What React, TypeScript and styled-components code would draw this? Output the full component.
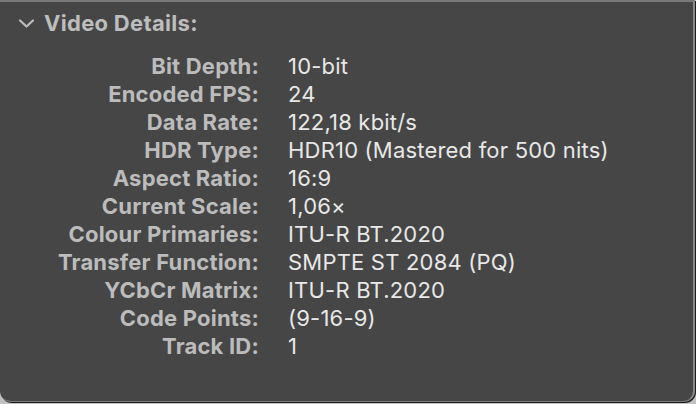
import React from 'react'
import styled, { createGlobalStyle } from 'styled-components'

interface IDetail {
  label: string
  value: string
}

const details: IDetail[] = [
  { label: 'Bit Depth:', value: '10-bit' },
  { label: 'Encoded FPS:', value: '24' },
  { label: 'Data Rate:', value: '122,18 kbit/s' },
  { label: 'HDR Type:', value: 'HDR10 (Mastered for 500 nits)' },
  { label: 'Aspect Ratio:', value: '16:9' },
  { label: 'Current Scale:', value: '1,06×' },
  { label: 'Colour Primaries:', value: 'ITU-R BT.2020' },
  { label: 'Transfer Function:', value: 'SMPTE ST 2084 (PQ)' },
  { label: 'YCbCr Matrix:', value: 'ITU-R BT.2020' },
  { label: 'Code Points:', value: '(9-16-9)' },
  { label: 'Track ID:', value: '1' },
]

const GlobalStyle = createGlobalStyle`
  html, body {
    margin: 0;
    padding: 0;
    background: #c2c2c2;
    width: 696px;
    height: 404px;
    overflow: hidden;
  }
`

const Chevron: React.FC = () => (
  <svg width="17" height="11" viewBox="0 0 17 11">
    <path
      d="M2 2.5 L8.5 8.5 L15 2.5"
      fill="none"
      stroke="#bdbdbd"
      strokeWidth="2.2"
      strokeLinecap="round"
      strokeLinejoin="round"
    />
  </svg>
)

const App: React.FC = () => {
  return (
    <>
      <GlobalStyle />
      <Panel>
        {/* Section header */}
        <Header>
          <Chevron />
          <span>Video Details:</span>
        </Header>
        {/* Detail rows */}
        <DetailGrid>
          {details.map(
            (d: IDetail) => (
              <React.Fragment key={d.label}>
                <Label>{d.label}</Label>
                <Value>{d.value}</Value>
              </React.Fragment>
            )
          )}
        </DetailGrid>
      </Panel>
    </>
  )
}

const Panel = styled.div`
  box-sizing: border-box;
  width: 695px;
  height: 402px;
  background: #464646;
  border-top: 2px solid #787878;
  border-right: 2px solid #8a8a8a;
  border-bottom: 1px solid #7a7a7a;
  border-radius: 0 0 11px 11px;
  box-shadow: 1px 1px 0 #1c1c1c;
  font-family: Inter, 'Noto Sans', sans-serif;
  -webkit-font-smoothing: antialiased;
`

const Header = styled.div`
  display: flex;
  align-items: center;
  gap: 9px;
  height: 28px;
  margin-top: 7px;
  padding-left: 18px;
  color: #bdbdbd;
  font-size: 22px;
  font-weight: 700;
  letter-spacing: 0.3px;
  svg {
    margin-top: 1px;
  }
`

const DetailGrid = styled.div`
  display: grid;
  grid-template-columns: 259px auto;
  column-gap: 29px;
  margin-top: 15px;
  line-height: 28px;
  font-size: 22px;
  letter-spacing: 0.2px;
`

const Label = styled.div`
  text-align: right;
  font-weight: 700;
  color: #bcbcbc;
`

const Value = styled.div`
  font-weight: 400;
  color: #e8e8e8;
`

export default App
